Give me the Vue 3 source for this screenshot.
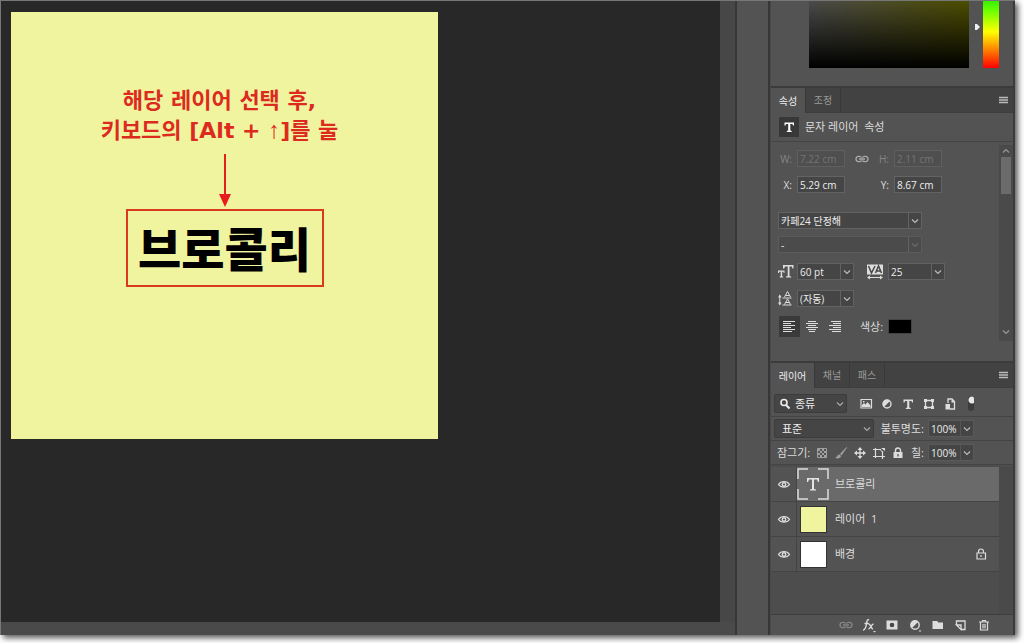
<script setup>
import { ref } from 'vue'

const fields = ref({ w: '7.22 cm', h: '2.11 cm', x: '5.29 cm', y: '8.67 cm' })
const align = ref('left')
const aligns = [
  { id: 'left', label: '왼쪽 정렬' },
  { id: 'center', label: '가운데 정렬' },
  { id: 'right', label: '오른쪽 정렬' },
]
const filters = ['image', 'adjust', 'type', 'shape', 'smart']
const locks = ['checker', 'brush', 'move', 'artboard', 'lock']
const layers = [
  { id: 1, name: '브로콜리', kind: 'text' },
  { id: 2, name: '레이어\u00a0 1', kind: 'yellow' },
  { id: 3, name: '배경', kind: 'white', locked: true },
]
const selected = ref(1)
const actions = ['link', 'fx', 'mask', 'adjustmenu', 'folder', 'new', 'trash']
</script>

<template>
  <div class="page">
    <svg class="sprite" aria-hidden="true">
      <symbol id="chevron" viewBox="0 0 12 12"><path d="M3 4.500l3 3 3-3" fill="none" stroke="currentColor" stroke-width="1.200" /></symbol>
      <symbol id="up" viewBox="0 0 12 12"><path d="M3 7.500l3-3 3 3" fill="none" stroke="currentColor" stroke-width="1.200" /></symbol>
      <symbol id="menu" viewBox="0 0 16 16"><path d="M3 5.500h9M3 8h9M3 10.500h9" stroke="currentColor" stroke-width="1.300" /></symbol>
      <symbol id="link" viewBox="0 0 16 16"><path d="M7.500 6.500C7 5 2 4.500 2 8s5 3 5.500 1.500M8.500 6.500C9 5 14 4.500 14 8s-5 3-5.500 1.500M5 8h6" fill="none" stroke="currentColor" stroke-width="1.300" /></symbol>
      <symbol id="type" viewBox="0 0 16 16"><path d="M3.500 3.500h9.500v3h-1L11.500 5H9.300v6.500l1.400.5v1H5.800v-1l1.400-.5V5H5l-.5 1.500h-1z" fill="currentColor" /></symbol>
      <symbol id="size" viewBox="0 0 16 16"><path d="M5 1.500h10.500v3.500h-1L13.800 3H11.500v9.700l1.700.4V14H8v-.9l1.700-.4V3H7L6.200 5H5zM0 7h6.500v2.500h-.8L5.400 8.200H4.100v4.500l1 .4v.9H1.700v-.9l1-.4V8.200H1.300L.8 9.500H0z" fill="currentColor" /></symbol>
      <symbol id="kerning" viewBox="0 0 16 16"><path d="M0 1h16v10H0z" fill="currentColor" /><path d="M1.500 2.500l3 7 3.500-7M8.500 9.500l3-7 3 7M9.500 7.500h4" fill="none" stroke="#474747" stroke-width="1.500" /><path d="M1 14h14" stroke="currentColor" /><path d="M0 14l3-2v4zM16 14l-3-2v4z" fill="currentColor" /></symbol>
      <symbol id="leading" viewBox="0 0 16 16"><path d="M6.500 6.500l3-5.500 3 5.500M7.500 5h4M6.500 14l3-5.500 3 5.500M7.500 12h4M4.500 7.500h9M4.500 14.500h9M1.800 5v9" fill="none" stroke="currentColor" stroke-width="1" /><path d="M0 7l1.800-3 1.800 3zM0 12l1.800 3 1.800-3z" fill="currentColor" /></symbol>
      <symbol id="left" viewBox="0 0 16 16"><path d="M2 2.500h12M2 4.500h8M2 6.500h12M2 8.500h8M2 10.500h12M2 12.500h9" stroke="currentColor" /></symbol>
      <symbol id="center" viewBox="0 0 16 16"><path d="M4 2.500h8M2 4.500h12M4 6.500h8M2 8.500h12M4 10.500h8M5 12.500h6" stroke="currentColor" /></symbol>
      <symbol id="right" viewBox="0 0 16 16"><path d="M4 2.500h10M6 4.500h8M2 6.500h12M6 8.500h8M2 10.500h12M5 12.500h9" stroke="currentColor" /></symbol>
      <symbol id="search" viewBox="0 0 12 12"><circle cx="5" cy="4.500" r="3" fill="none" stroke="currentColor" stroke-width="1.600" /><path d="M7 7l3.500 3.500" stroke="currentColor" stroke-width="2" /></symbol>
      <symbol id="image" viewBox="0 0 16 16"><path d="M3 3.500h10.500v8.500H3z" fill="none" stroke="currentColor" stroke-width="1.200" /><path d="M4 11V9l2-2 1.500 1.500L9.500 6 12.500 9.500V11zM5 5h1.500v1.500H5z" fill="currentColor" /></symbol>
      <symbol id="adjust" viewBox="0 0 16 16"><circle cx="8" cy="8" r="4" fill="none" stroke="currentColor" stroke-width="1.400" /><path d="M11 5A4 4 0 1 0 5 11z" fill="currentColor" /></symbol>
      <symbol id="shape" viewBox="0 0 16 16"><path d="M5 4.500h6M5 11.500h6M4.500 5v6M11.500 5v6" stroke="currentColor" stroke-width="1.300" /><path d="M3 3h3v3H3zM10 3h3v3h-3zM3 10h3v3H3zM10 10h3v3h-3z" fill="currentColor" /></symbol>
      <symbol id="smart" viewBox="0 0 16 16"><path d="M6 7V3h4l2.500 2.500V13H8" fill="none" stroke="currentColor" stroke-width="1.300" /><path d="M3.500 8H8v5.500H3.500zM9.500 3v3.500H13z" fill="currentColor" /></symbol>
      <symbol id="checker" viewBox="0 0 16 16"><path d="M3.500 3.500h9v9h-9z" fill="none" stroke="currentColor" /><path d="M4 4h2v2H4zM8 4h2v2H8zM6 6h2v2H6zM10 6h2v2h-2zM4 8h2v2H4zM8 8h2v2H8zM6 10h2v2H6zM10 10h2v2h-2z" fill="currentColor" /></symbol>
      <symbol id="brush" viewBox="0 0 16 16"><path d="M13.500 2L7 9l1.500 1.500 5.500-8zM6.500 9.500C4 9.500 4.500 12 2 13c3 1 6 0 6-2z" fill="currentColor" /></symbol>
      <symbol id="move" viewBox="0 0 16 16"><path d="M8 3v10M3 8h10" stroke="currentColor" stroke-width="1.300" /><path d="M8 2l2.500 3h-5zM8 14l2.500-3h-5zM2 8l3-2.500v5zM14 8l-3-2.500v5z" fill="currentColor" /></symbol>
      <symbol id="artboard" viewBox="0 0 16 16"><path d="M2 4.500h8M4.500 3v10M2 11.500h12M11.500 6v8" stroke="currentColor" stroke-width="1.200" /><path d="M10 3l4 3v-3z" fill="currentColor" /><path d="M9 4.500l2.500 2.500" stroke="currentColor" /></symbol>
      <symbol id="lock" viewBox="0 0 16 16"><path d="M5.500 7V5.500a2.500 2.500 0 0 1 5 0V7" fill="none" stroke="currentColor" stroke-width="1.400" /><path d="M3.500 7h9v6h-9z" fill="currentColor" /><path d="M8 9v2.500" stroke="#535353" stroke-width="1.300" /></symbol>
      <symbol id="lockline" viewBox="0 0 16 16"><path d="M5.500 7V5.500a2.500 2.500 0 0 1 5 0V7M4 7h8.500v6H4zM8 9v2" fill="none" stroke="currentColor" stroke-width="1.200" /></symbol>
      <symbol id="eye" viewBox="0 0 16 16"><path d="M2.500 8.500C5 4.500 11 4.500 13.500 8.500 11 12 5 12 2.500 8.500z" fill="none" stroke="currentColor" stroke-width="1.200" /><circle cx="8" cy="8.500" r="2.400" fill="currentColor" /><circle cx="8" cy="8.500" r="1" fill="#474747" /></symbol>
      <symbol id="fx" viewBox="0 0 16 16"><path d="M8 3C6 2 6 4 5.500 7S4.500 13 2 13M3.500 6.500h4M7.500 7c2-.8 2.500 5 4.500 5M12.500 7c-2 0-3 5-5 5" fill="none" stroke="currentColor" stroke-width="1.400" /><path d="M12 14h3l-1.500 1.500z" fill="currentColor" /></symbol>
      <symbol id="mask" viewBox="0 0 16 16"><path d="M2.500 3.500h11v9h-11z" fill="currentColor" /><circle cx="8" cy="8" r="2.300" fill="#474747" /></symbol>
      <symbol id="adjustmenu" viewBox="0 0 16 16"><circle cx="8" cy="8" r="4.200" fill="none" stroke="currentColor" stroke-width="1.400" /><path d="M11 5A4.200 4.200 0 1 0 5 11z" fill="currentColor" /><path d="M11.500 13.500h3L13 15z" fill="currentColor" /></symbol>
      <symbol id="folder" viewBox="0 0 16 16"><path d="M2.500 4H7l1.500 1.500H13V12H2.500z" fill="currentColor" /></symbol>
      <symbol id="new" viewBox="0 0 16 16"><path d="M3.500 8V4H12v8.500H8M3.500 8l4.500 4.500V8z" fill="none" stroke="currentColor" stroke-width="1.300" /></symbol>
      <symbol id="trash" viewBox="0 0 16 16"><path d="M3 5h10M6.500 5V3.500h3V5M4.500 5v8h7V5M7 7v4.500M9 7v4.500" fill="none" stroke="currentColor" stroke-width="1.200" /></symbol>
    </svg>

    <div class="window">
      <main class="workspace">
        <div class="stage">
          <section class="canvas">
            <p class="guide"><span>해당 레이어 선택 후,</span><span>키보드의 [Alt + <i>↑</i>]를 눌</span></p>
            <svg class="pointer" viewBox="0 0 14 54" aria-hidden="true"><path d="M7 0v42" stroke="#e2231a" stroke-width="2" /><path d="M1 40h12L7 53z" fill="#e81c1c" /></svg>
            <div class="word">브로콜리</div>
          </section>
          <div class="vscroll"></div>
        </div>
        <div class="hscroll"></div>
      </main>
      <div class="strip"></div>
      <aside class="panels">
        <section class="color">
          <div class="field"></div>
          <svg class="marker" viewBox="0 0 6 8" aria-hidden="true"><path d="M1 1h2l3 3-3 3H1z" fill="#eee" /></svg>
          <div class="hue"></div>
        </section>

        <section class="props">
          <nav class="tabs">
            <button class="tab on">속성</button><button class="tab">조정</button>
            <button class="more" aria-label="속성 메뉴"><svg class="ic"><use href="#menu" /></svg></button>
          </nav>
          <h2 class="kind"><span class="badge"><svg class="ic"><use href="#type" /></svg></span>문자 레이어&nbsp; 속성</h2>
          <div class="scroller">
            <div class="form">
              <div class="dims">
                <label class="off" for="w">W:</label><input id="w" v-model="fields.w" disabled />
                <svg class="ic chain"><use href="#link" /></svg>
                <label class="off" for="h">H:</label><input id="h" v-model="fields.h" disabled />
                <label for="x">X:</label><input id="x" v-model="fields.x" />
                <span></span>
                <label for="y">Y:</label><input id="y" v-model="fields.y" />
              </div>
              <div class="combo family"><select aria-label="글꼴"><option>카페24 단정해</option></select><svg class="ic"><use href="#chevron" /></svg></div>
              <div class="combo family dim"><select aria-label="글꼴 스타일" disabled><option>-</option></select><svg class="ic"><use href="#chevron" /></svg></div>
              <div class="metrics">
                <svg class="ic big"><use href="#size" /></svg>
                <div class="combo"><select aria-label="글꼴 크기"><option>60 pt</option></select><svg class="ic"><use href="#chevron" /></svg></div>
                <svg class="ic big"><use href="#kerning" /></svg>
                <div class="combo"><select aria-label="자간"><option>25</option></select><svg class="ic"><use href="#chevron" /></svg></div>
                <svg class="ic big"><use href="#leading" /></svg>
                <div class="combo"><select aria-label="행간"><option>(자동)</option></select><svg class="ic"><use href="#chevron" /></svg></div>
              </div>
              <div class="aligns">
                <button v-for="a in aligns" :key="a.id" :class="{ on: align === a.id }" :aria-label="a.label" @click="align = a.id"><svg class="ic"><use :href="'#' + a.id" /></svg></button>
                <span class="clabel">색상:</span><button class="swatch" aria-label="색상"></button>
              </div>
            </div>
            <div class="bar"><svg class="ic"><use href="#up" /></svg><span class="thumb"></span><svg class="ic end"><use href="#chevron" /></svg></div>
          </div>
        </section>

        <section class="layers">
          <nav class="tabs">
            <button class="tab on wide">레이어</button><button class="tab">채널</button><button class="tab">패스</button>
            <button class="more" aria-label="레이어 메뉴"><svg class="ic"><use href="#menu" /></svg></button>
          </nav>
          <div class="tools filter">
            <div class="drop search"><svg class="ic lens"><use href="#search" /></svg><select aria-label="레이어 필터"><option>종류</option></select><svg class="ic"><use href="#chevron" /></svg></div>
            <div class="filters"><button v-for="f in filters" :key="f" :aria-label="f"><svg class="ic"><use :href="'#' + f" /></svg></button></div>
            <button class="toggle" aria-label="필터 켜기"></button>
          </div>
          <div class="tools">
            <div class="drop mode"><select aria-label="혼합 모드"><option>표준</option></select><svg class="ic"><use href="#chevron" /></svg></div>
            <label class="push" for="opacity">불투명도:</label>
            <div class="combo pct"><select id="opacity"><option>100%</option></select><svg class="ic"><use href="#chevron" /></svg></div>
          </div>
          <div class="tools">
            <span class="locklabel">잠그기:</span>
            <div class="locks"><button v-for="l in locks" :key="l" :class="'lk-' + l" :aria-label="l"><svg class="ic"><use :href="'#' + l" /></svg></button></div>
            <label class="push" for="fill">칠:</label>
            <div class="combo pct"><select id="fill"><option>100%</option></select><svg class="ic"><use href="#chevron" /></svg></div>
          </div>
          <div class="listwrap">
            <ul class="list">
              <li v-for="l in layers" :key="l.id" :class="{ sel: selected === l.id }" @click="selected = l.id">
                <button class="eye" :aria-label="l.name + ' 표시'"><svg class="ic"><use href="#eye" /></svg></button>
                <div class="row">
                  <span v-if="l.kind === 'text'" class="thumbnail text"><svg viewBox="0 0 32 32"><path d="M1 11V1h10M21 1h10v10M31 21v10H21M11 31H1V21" fill="none" stroke="#ddd" stroke-width="1.500" /><path d="M10 10h12v4h-1l-1-2.500h-3v9.500l2 .5v1h-6v-1l2-.5v-9.500h-3L11 14h-1z" fill="#e4e4e4" /></svg></span>
                  <span v-else class="thumbnail" :class="l.kind"></span>
                  <span class="name">{{ l.name }}</span>
                  <svg v-if="l.locked" class="ic locked"><use href="#lockline" /></svg>
                </div>
              </li>
            </ul>
            <div class="gutter"></div>
          </div>
          <footer class="actions"><button v-for="a in actions" :key="a" :class="'act-' + a" :aria-label="a"><svg class="ic"><use :href="'#' + a" /></svg></button></footer>
        </section>
      </aside>
    </div>
  </div>
</template>

<style>
body { margin: 0; background: #fff; }
</style>

<style scoped>
* { box-sizing: border-box; }
.page { min-height: 100vh; display: flex; padding: 0 9px 8px 0; font: 11px/16px "Open Sans", "Noto Sans CJK KR", sans-serif; color: #ddd; }
.sprite { position: absolute; width: 0; height: 0; }
button { border: 0; padding: 0; margin: 0; background: none; color: inherit; font: inherit; }
.ic { width: 16px; height: 16px; display: block; flex: none; }
.window { flex: 1; display: flex; min-width: 0; background: #3a3a3a; border-top: 1px solid #777; border-left: 1px solid #777; box-shadow: 3px 3px 6px rgba(0, 0, 0, .65); }
.workspace { flex: 1; min-width: 0; display: flex; flex-direction: column; background: #282828; }
.stage { flex: 1; display: flex; justify-content: space-between; }
.canvas { width: 427px; height: 427px; margin: 11px 0 0 10px; background: #f1f49e; display: flex; flex-direction: column; align-items: center; }
.guide { margin: 74px 0 0; padding-right: 10px; text-align: center; white-space: nowrap; font: bold 22px/30px "DejaVu Sans", "Noto Sans CJK KR", sans-serif; color: #dc2a20; }
.guide span { display: block; height: 30px; }
.guide i { font: normal 24px/24px "Liberation Sans", sans-serif; }
.pointer { width: 14px; height: 54px; margin: 8px 0 1px; }
.word { width: 198px; height: 78px; border: 2px solid #dc3a20; text-align: center; white-space: nowrap; font: 900 47px/72px "Noto Sans CJK KR", sans-serif; color: #000; }
.vscroll { width: 15px; background: #474747; }
.hscroll { height: 13px; background: #4a4a4a; }
.strip { width: 35px; background: #535353; border: solid #373737; border-width: 0 2px; }
.panels { width: 245px; display: flex; flex-direction: column; background: #535353; border-left: 1px solid #494949; border-right: 2px solid #3b3b3b; }
.color { height: 87px; padding-left: 38px; display: flex; border-bottom: 2px solid #3b3b3b; }
.field { width: 160px; height: 67px; background: linear-gradient(to bottom, transparent, #000), linear-gradient(to right, #4b4b4b, #4d4d00); }
.marker { width: 6px; height: 8px; margin: 22px 3px 0 5px; }
.hue { width: 16px; height: 67px; background: linear-gradient(#38f000, #60ff00 12%, #ffff00 46%, #ff7c00 74%, #ff0000); }
.tabs { height: 25px; display: flex; background: #424242; border-bottom: 1px solid #3e3e3e; }
.tab { width: 35px; color: #999; font-size: 10px; border-right: 1px solid #383838; }
.tab.wide { width: 44px; }
.tab.on { background: #535353; color: #eee; height: 25px; }
.more { margin-left: auto; padding-right: 1px; color: #bbb; }
.props { height: 275px; border-bottom: 2px solid #3b3b3b; }
.kind { margin: 0; height: 29px; display: flex; align-items: center; padding-left: 8px; gap: 6px; font-size: 11px; font-weight: 400; border-bottom: 1px solid #444; }
.badge { width: 20px; height: 20px; padding: 2px; background: #383838; color: #fff; }
.scroller { display: flex; justify-content: space-between; padding-top: 3px; }
.form { padding: 5px 0 0 7px; }
.dims { display: grid; grid-template-columns: 14px 48px 18px 16px 48px; column-gap: 5px; row-gap: 9px; align-items: center; font-size: 10px; }
.dims label { text-align: right; }
.off { color: #858585; }
.chain { color: #aaa; margin-left: 4px; }
input { width: 48px; height: 17px; padding: 0 2px; border: 1px solid #636363; background: #454545; color: #eee; font: 10px/14px "Open Sans", sans-serif; }
input:disabled { background: #4f4f4f; border-color: #5f5f5f; color: #747474; }
.combo { width: 57px; height: 17px; display: flex; align-items: center; background: #454545; border: 1px solid #626262; }
.combo select { flex: 1; min-width: 0; height: 15px; border-right: 1px solid #626262; padding-left: 2px; }
.combo .ic { width: 12px; height: 12px; color: #bbb; }
select { appearance: none; margin: 0; padding: 0; border: 0; border-radius: 0; background: transparent; color: #eee; font: 10px/14px "Open Sans", "Noto Sans CJK KR", sans-serif; opacity: 1; }
.family { width: 144px; margin-top: 19px; }
.family.dim { margin-top: 7px; background: #4b4b4b; border-color: #5a5a5a; }
.dim .ic { color: #696969; }
.metrics { margin-top: 10px; display: grid; grid-template-columns: 15px 57px 26px 57px; column-gap: 4px; row-gap: 10px; align-items: center; }
.metrics .ic.big:nth-child(3) { margin-left: 9px; }
.big { width: 16px; height: 17px; }
.aligns { display: flex; align-items: center; margin-top: 9px; padding-left: 1px; gap: 2px; }
.aligns button { width: 21px; height: 21px; padding: 2px; }
.aligns .on { background: #3a3a3a; }
.clabel { margin-left: 12px; }
.aligns .swatch { width: 24px; height: 15px; margin-left: 3px; background: #000; border: 1px solid #444; }
.bar { width: 14px; height: 196px; background: #4a4a4a; display: flex; flex-direction: column; align-items: center; color: #999; }
.bar .ic { width: 12px; height: 12px; }
.thumb { width: 10px; height: 37px; background: #6b6b6b; }
.bar .end { margin-top: auto; margin-bottom: 3px; }
.layers { flex: 1; display: flex; flex-direction: column; }
.tools { height: 24px; padding: 0 39px 0 3px; display: flex; align-items: center; border-bottom: 1px solid #444; white-space: nowrap; }
.filter { height: 29px; padding-top: 3px; }
.drop { height: 19px; display: flex; align-items: center; background: #454545; border: 1px solid #3c3c3c; border-radius: 2px; }
.drop select { flex: 1; min-width: 0; padding-left: 4px; font-size: 11px; }
.drop .ic { width: 12px; height: 12px; color: #aaa; }
.drop .lens { margin-left: 4px; color: #eee; }
.search { width: 73px; flex: none; }
.mode { width: 100px; flex: none; }
.mode select { padding-left: 7px; }
.filters { display: flex; gap: 5px; margin-left: 11px; }
.filters button { width: 16px; height: 16px; }
.toggle { width: 8px; height: 15px; margin-left: 10px; border-radius: 4px; background: radial-gradient(circle at 4px 4px, #e8e8e8 3px, #3c3c3c 4px); }
.push { margin-left: auto; margin-right: 4px; }
.pct { width: 46px; flex: none; border-color: #5a5a5a; }
.pct select { border-right-color: #555; }
.locklabel { margin-left: 3px; }
.locks { display: flex; gap: 3px; margin-left: 4px; }
.lk-checker, .lk-brush { color: #a0a0a0; }
.listwrap { flex: 1; display: flex; background: #4d4d4d; border-top: 2px solid #4d4d4d; }
.list { flex: 1; margin: 0; padding: 0; list-style: none; }
.list li { height: 35px; display: flex; background: #535353; border-bottom: 1px solid #444; }
.eye { width: 26px; display: flex; align-items: center; justify-content: center; border-right: 1px solid #444; }
.row { flex: 1; display: flex; align-items: center; padding: 0 10px 0 3px; }
.sel .row { background: #6a6a6a; padding-left: 0; }
.thumbnail { width: 27px; height: 27px; border: 1px solid #333; margin-right: 8px; }
.thumbnail.text { width: 32px; height: 32px; border: 0; margin-right: 6px; }
.thumbnail svg { display: block; width: 32px; height: 32px; }
.yellow { background: #f1f49e; }
.white { background: #fff; }
.locked { margin-left: auto; }
.gutter { width: 14px; background: #4a4a4a; }
.actions { height: 21px; display: flex; justify-content: flex-end; align-items: center; gap: 7px; padding-right: 21px; border-top: 1px solid #3e3e3e; }
.act-link { color: #858585; }
</style>
